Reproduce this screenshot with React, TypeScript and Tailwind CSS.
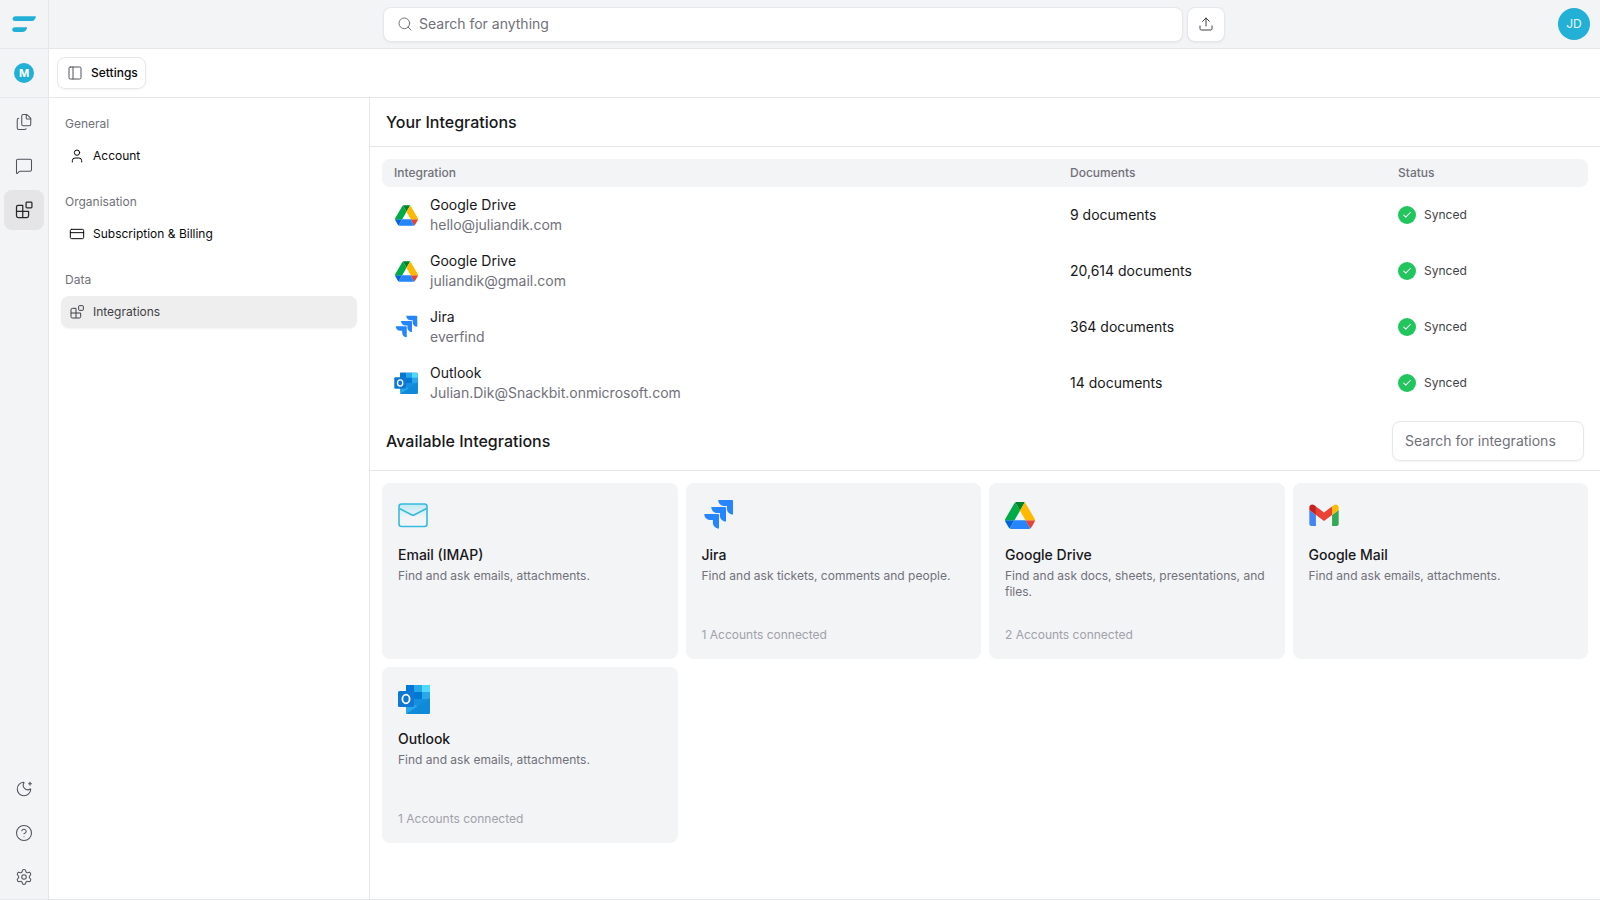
import React from 'react';
import { Search, Upload, PanelLeft, Files, MessageSquare, MoonStar, CircleHelp, Settings, User, CreditCard, Check } from 'lucide-react';

function BlocksIcon({ className }: { className?: string }) {
  return (
    <svg viewBox="0 0 24 24" fill="none" stroke="currentColor" strokeWidth="1.5" strokeLinejoin="round" className={className}>
      <rect x="14.5" y="2.5" width="7" height="7" rx="1" />
      <path d="M10.5 6.5H5a2 2 0 0 0-2 2V19a2 2 0 0 0 2 2h10.5a2 2 0 0 0 2-2v-5.5h-7zM3 13.5h7.5M10.5 13.5V21" />
    </svg>
  );
}

function Logo() {
  return (
    <svg viewBox="0 0 24 16" className="w-6 h-4" fill="#22b0d6">
      <path d="M3.5 0.2H23.8C23.8 2.8 22 5 19.5 5H3C1.3 5 0.4 3.8 0.6 2.6 0.8 1.2 2 0.2 3.5 0.2z" />
      <path d="M2.8 7.3H15C15 9.800 13.200 12 10.800 12H2.800C1.200 12 0.200 10.900 0.200 9.700 0.200 8.400 1.300 7.300 2.800 7.300z" transform="translate(0 4)" />
    </svg>
  );
}

function DriveIcon({ className }: { className?: string }) {
  return (
    <svg viewBox="0 0 87.3 78" className={className}>
      <path d="m6.6 66.850 3.850 6.650c.8 1.400 1.950 2.500 3.300 3.300l13.750-23.800h-27.500c0 1.550.4 3.100 1.200 4.500z" fill="#0066da" />
      <path d="m43.650 25-13.750-23.800c-1.350.8-2.500 1.900-3.300 3.300l-25.400 44a9.060 9.060 0 0 0 -1.200 4.500h27.500z" fill="#00ac47" />
      <path d="m73.550 76.800c1.350-.8 2.500-1.900 3.300-3.300l1.600-2.750 7.650-13.250c.8-1.400 1.200-2.950 1.200-4.500h-27.502l5.852 11.500z" fill="#ea4335" />
      <path d="m43.650 25 13.750-23.800c-1.350-.8-2.900-1.200-4.500-1.200h-18.500c-1.600 0-3.150.45-4.500 1.200z" fill="#00832d" />
      <path d="m59.800 53h-32.300l-13.750 23.800c1.350.8 2.900 1.200 4.500 1.200h50.800c1.600 0 3.150-.45 4.500-1.200z" fill="#2684fc" />
      <path d="m73.400 26.500-12.700-22c-.8-1.400-1.950-2.500-3.300-3.300l-13.750 23.800 16.150 28h27.450c0-1.550-.4-3.100-1.200-4.500z" fill="#ffba00" />
    </svg>
  );
}

function JiraIcon({ className }: { className?: string }) {
  return (
    <svg viewBox="0 0 32 32" className={className} fill="#2684ff">
      <path d="M31 1H17.500c0 3.400 2.700 6.100 6.100 6.100h2.500v2.400c0 3.400 2.700 6.100 6.100 6.100V2.200C32.200 1.500 31.700 1 31 1z" transform="translate(-1.200 0)" />
      <path d="M24 8H10.500c0 3.400 2.700 6.100 6.100 6.100h2.500v2.400c0 3.400 2.700 6.100 6.100 6.100V9.200C25.200 8.500 24.700 8 24 8z" transform="translate(-1.200 0)" />
      <path d="M17 15H3.500c0 3.400 2.700 6.100 6.100 6.100h2.500v2.400c0 3.400 2.700 6.100 6.100 6.100V16.200C18.200 15.500 17.700 15 17 15z" transform="translate(-1.200 0)" />
    </svg>
  );
}

function OutlookIcon({ className }: { className?: string }) {
  return (
    <svg viewBox="0 0 32 30" className={className}>
      <path d="M9 1h21a2 2 0 0 1 2 2v12H8V2a1 1 0 0 1 1-1z" fill="#0364b8" />
      <rect x="8" y="1" width="8" height="7" fill="#0078d4" />
      <rect x="16" y="1" width="8" height="7" fill="#28a8ea" />
      <rect x="24" y="1" width="8" height="7" fill="#50d9ff" />
      <rect x="16" y="8" width="8" height="7" fill="#0078d4" />
      <rect x="24" y="8" width="8" height="7" fill="#28a8ea" />
      <path d="M8 15h24v13a2 2 0 0 1-2 2H10a2 2 0 0 1-2-2z" fill="#1490df" />
      <path d="M8 15l12 8 12-8v13a2 2 0 0 1-2 2H10a2 2 0 0 1-2-2z" fill="#28a8ea" />
      <path d="M8 30l24-16v14a2 2 0 0 1-2 2z" fill="#0f8ad8" />
      <rect x="0" y="7" width="16" height="16" rx="1.500" fill="#0f78d4" />
      <ellipse cx="8" cy="15" rx="3.600" ry="4.300" fill="none" stroke="#fff" strokeWidth="1.800" />
    </svg>
  );
}

function GmailIcon({ className }: { className?: string }) {
  return (
    <svg viewBox="0 0 32 24" className={className}>
      <path d="M2.200 24h5V12L0 6.600V21.800C0 23 1 24 2.200 24z" fill="#4285f4" />
      <path d="M24.800 24h5c1.200 0 2.200-1 2.200-2.200V6.600L24.800 12z" fill="#34a853" />
      <path d="M24.800 2.600V12L32 6.600V3.800c0-2.700-3-4.200-5.200-2.600z" fill="#fbbc04" />
      <path d="M7.200 12V2.600L16 9.200l8.800-6.600V12L16 18.600z" fill="#ea4335" />
      <path d="M0 3.800v2.800L7.200 12V2.600L5.200 1.200C3 -.4 0 1.100 0 3.800z" fill="#c5221f" />
    </svg>
  );
}

function MailIcon() {
  return (
    <svg viewBox="0 0 30 25" className="w-[30px] h-[25px]" fill="none">
      <defs>
        <linearGradient id="mailFill" x1="0" y1="0" x2="0" y2="1">
          <stop offset="0" stopColor="#bfe9f5" />
          <stop offset="0.6" stopColor="#f3f4f6" />
        </linearGradient>
      </defs>
      <rect x="1" y="1" width="28" height="22.500" rx="2.500" fill="url(#mailFill)" stroke="#35bbdf" strokeWidth="1.600" />
      <path d="M1.500 5.500l12 6.300a3 3 0 0 0 3 0l12-6.300" stroke="#35bbdf" strokeWidth="1.600" />
    </svg>
  );
}

function RailButton({ children, active }: { children: React.ReactNode; active?: boolean }) {
  return (
    <div className={`w-10 h-10 flex items-center justify-center rounded-lg ${active ? 'bg-[#e5e5e8] text-[#27272a]' : 'text-[#52525b]'}`}>
      {children}
    </div>
  );
}

function SideGroup({ title, children }: { title: string; children: React.ReactNode }) {
  return (
    <div className="mb-[14px]">
      <div className="h-[32px] px-1 flex items-center text-xs font-normal text-[#71717a]">{title}</div>
      {children}
    </div>
  );
}

function SideItem({ icon, label, active }: { icon: React.ReactNode; label: string; active?: boolean }) {
  return (
    <div className={`h-8 px-2 flex items-center gap-2 rounded-lg text-xs ${active ? 'bg-[#eeeeee] text-[#3f3f46] shadow-[0_1px_2px_rgba(0,0,0,0.05)]' : 'text-[#09090b]'}`}>
      <span className="w-4 flex justify-center">{icon}</span>
      <span>{label}</span>
    </div>
  );
}

const rows = [
  { icon: <DriveIcon className="w-[23px] h-[21px]" />, name: 'Google Drive', account: 'hello@juliandik.com', docs: '9 documents' },
  { icon: <DriveIcon className="w-[23px] h-[21px]" />, name: 'Google Drive', account: 'juliandik@gmail.com', docs: '20,614 documents' },
  { icon: <JiraIcon className="w-6 h-6" />, name: 'Jira', account: 'everfind', docs: '364 documents' },
  { icon: <OutlookIcon className="w-6 h-[22px]" />, name: 'Outlook', account: 'Julian.Dik@Snackbit.onmicrosoft.com', docs: '14 documents' },
];

const cards = [
  { icon: <MailIcon />, name: 'Email (IMAP)', desc: 'Find and ask emails, attachments.' },
  { icon: <JiraIcon className="w-8 h-8" />, name: 'Jira', desc: 'Find and ask tickets, comments and people.', foot: '1 Accounts connected' },
  { icon: <DriveIcon className="w-[30px] h-[27px]" />, name: 'Google Drive', desc: 'Find and ask docs, sheets, presentations, and files.', foot: '2 Accounts connected' },
  { icon: <GmailIcon className="w-[30px] h-[22px]" />, name: 'Google Mail', desc: 'Find and ask emails, attachments.' },
  { icon: <OutlookIcon className="w-8 h-[30px]" />, name: 'Outlook', desc: 'Find and ask emails, attachments.', foot: '1 Accounts connected' },
];

export default function App() {
  return (
    <div className="h-[900px] w-[1600px] flex flex-col overflow-hidden bg-white font-['Inter',sans-serif]">
      <header className="h-[49px] shrink-0 flex bg-[#f3f4f6] border-b border-[#e5e7eb]">
        <div className="w-[49px] shrink-0 flex items-center justify-center border-r border-[#e5e7eb]">
          <Logo />
        </div>
        <div className="flex-1 flex items-center pl-[334px] pr-[10px]">
          <div className="w-[800px] h-[35px] bg-white rounded-lg border border-[#e5e7eb] shadow-[0_1px_2px_rgba(0,0,0,0.05)] flex items-center pl-[13px] gap-[6px] text-sm text-[#71717a]">
            <Search className="w-4 h-4" strokeWidth={1.5} />
            <span>Search for anything</span>
          </div>
          <div className="ml-1 w-[38px] h-[35px] bg-white rounded-lg border border-[#e5e7eb] shadow-[0_1px_2px_rgba(0,0,0,0.05)] flex items-center justify-center text-[#3f3f46]">
            <Upload className="w-4 h-4" strokeWidth={1.5} />
          </div>
          <div className="ml-auto w-8 h-8 rounded-full bg-[#22b0d6] text-white/90 text-xs flex items-center justify-center">JD</div>
        </div>
      </header>

      <div className="h-[49px] shrink-0 flex border-b border-[#e5e7eb]">
        <div className="w-[49px] shrink-0 bg-[#f3f4f6] border-r border-[#e5e7eb] flex items-center justify-center">
          <div className="w-5 h-5 rounded-full bg-[#22b0d6] text-white text-[11px] font-bold flex items-center justify-center">M</div>
        </div>
        <div className="flex items-center pl-2">
          <div className="h-8 w-[89px] rounded-lg border border-[#e5e7eb] shadow-[0_1px_2px_rgba(0,0,0,0.05)] flex items-center pl-[9px] gap-[8px] text-xs font-medium text-[#09090b]">
            <PanelLeft className="w-4 h-4 text-[#52525b]" strokeWidth={1.5} />
            <span>Settings</span>
          </div>
        </div>
      </div>

      <div className="flex-1 flex min-h-0 border-b border-[#e5e7eb]">
        <nav className="w-[49px] shrink-0 bg-[#f3f4f6] border-r border-[#e5e7eb] flex flex-col items-center pt-1 pb-[2px]">
          <div className="flex flex-col gap-1">
            <RailButton><Files className="w-[18px] h-[18px]" strokeWidth={1.4} /></RailButton>
            <RailButton><MessageSquare className="w-[18px] h-[18px]" strokeWidth={1.4} /></RailButton>
            <RailButton active><BlocksIcon className="w-5 h-5" /></RailButton>
          </div>
          <div className="mt-auto flex flex-col gap-1">
            <RailButton><MoonStar className="w-[18px] h-[18px]" strokeWidth={1.4} /></RailButton>
            <RailButton><CircleHelp className="w-[18px] h-[18px]" strokeWidth={1.4} /></RailButton>
            <RailButton><Settings className="w-[18px] h-[18px]" strokeWidth={1.4} /></RailButton>
          </div>
        </nav>

        <aside className="w-[321px] shrink-0 border-r border-[#e5e7eb] pt-[10px] pl-3 pr-3">
          <SideGroup title="General">
            <SideItem icon={<User className="w-4 h-4" strokeWidth={1.5} />} label="Account" />
          </SideGroup>
          <SideGroup title="Organisation">
            <SideItem icon={<CreditCard className="w-4 h-4" strokeWidth={1.5} />} label="Subscription & Billing" />
          </SideGroup>
          <SideGroup title="Data">
            <SideItem active icon={<BlocksIcon className="w-4 h-4" />} label="Integrations" />
          </SideGroup>
        </aside>

        <main className="flex-1 min-w-0">
          <div className="h-[49px] px-4 flex items-center border-b border-[#e5e7eb] text-base font-medium text-[#18181b]">Your Integrations</div>

          <div className="px-3 pt-3">
            <div className="h-7 rounded-lg bg-[#f3f4f6] grid grid-cols-[676px_328px_1fr] items-center px-3 text-xs font-medium text-[#71717a]">
              <div>Integration</div>
              <div>Documents</div>
              <div>Status</div>
            </div>
            {rows.map((r, i) => (
              <div key={i} className="h-14 grid grid-cols-[676px_328px_1fr] items-center px-3 first:mt-0">
                <div className="flex items-center">
                  <div className="w-6 flex justify-center">{r.icon}</div>
                  <div className="ml-3 text-sm leading-5">
                    <div className="text-[#18181b]">{r.name}</div>
                    <div className="text-[#71717a]">{r.account}</div>
                  </div>
                </div>
                <div className="text-sm text-[#18181b]">{r.docs}</div>
                <div className="flex items-center gap-2 text-xs text-[#3f3f46]">
                  <span className="w-[18px] h-[18px] rounded-full bg-[#22c55e] flex items-center justify-center">
                    <Check className="w-[10px] h-[10px] text-white" strokeWidth={2.5} />
                  </span>
                  Synced
                </div>
              </div>
            ))}
          </div>

          <div className="h-[60px] pl-4 pr-4 flex items-center justify-between border-b border-[#e5e7eb]">
            <span className="text-base font-medium text-[#18181b]">Available Integrations</span>
            <div className="w-[192px] h-[40px] rounded-lg border border-[#e5e7eb] shadow-[0_1px_2px_rgba(0,0,0,0.05)] flex items-center px-3 text-sm text-[#71717a]">Search for integrations</div>
          </div>

          <div className="px-3 pt-3 grid grid-cols-4 gap-2">
            {cards.map((c) => (
              <div key={c.name} className="h-[176px] rounded-lg bg-[#f3f4f6] px-4 pt-4 pb-4 flex flex-col">
                <div className="h-[32px] flex items-center">{c.icon}</div>
                <div className="mt-[14px] text-sm font-medium leading-5 text-[#18181b]">{c.name}</div>
                <div className="mt-[3px] text-xs leading-4 text-[#71717a]">{c.desc}</div>
                {c.foot && <div className="mt-auto text-xs leading-4 text-[#a1a1aa]">{c.foot}</div>}
              </div>
            ))}
          </div>
        </main>
      </div>
    </div>
  );
}
